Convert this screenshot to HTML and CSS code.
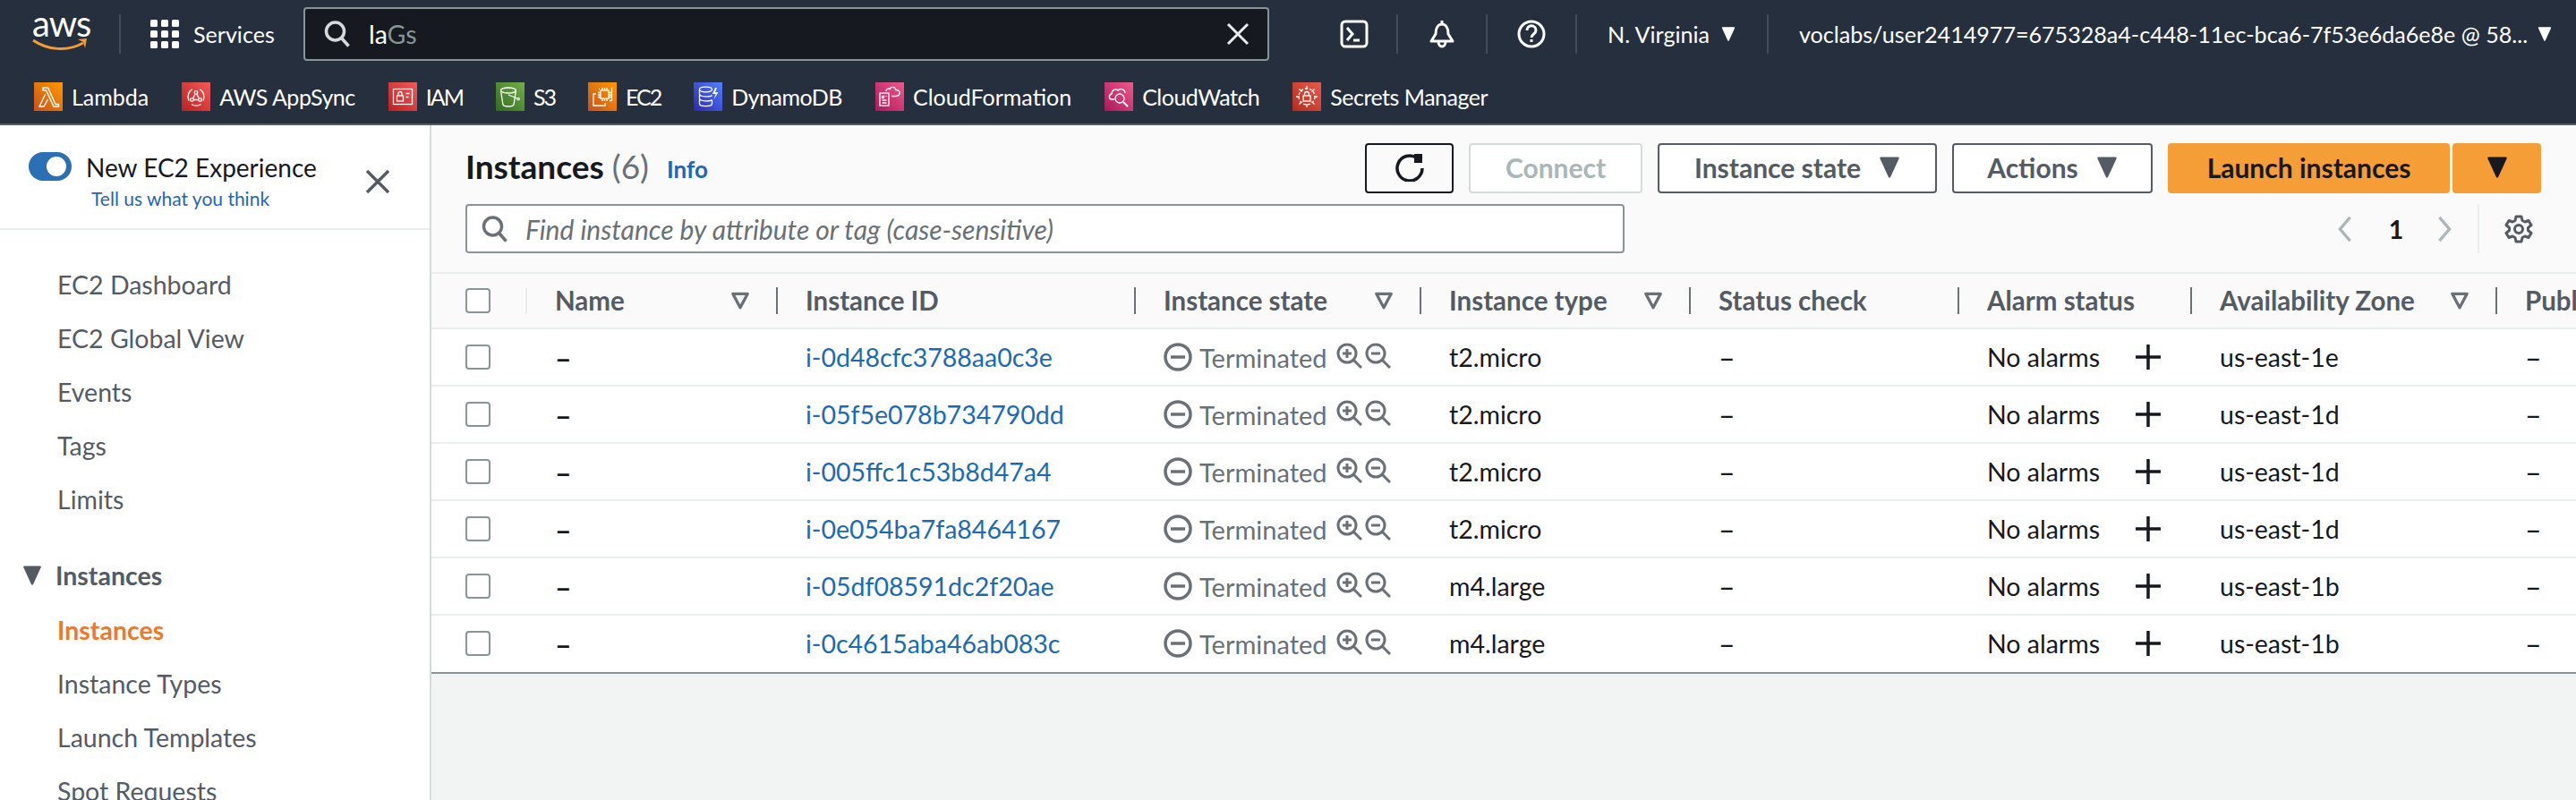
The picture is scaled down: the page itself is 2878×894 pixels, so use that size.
FILE: index.html
```html
<!DOCTYPE html>
<html lang="en">
<head>
<meta charset="utf-8">
<title>Instances | EC2 Management Console</title>
<link rel="stylesheet" href="styles.css">
</head>
<body>
<svg class="defs" aria-hidden="true">
  <defs>
    <linearGradient id="g-orange" x1="0" y1="1" x2="1" y2="0"><stop offset="0" stop-color="#c8511b"/><stop offset="1" stop-color="#f90"/></linearGradient>
    <linearGradient id="g-red" x1="0" y1="1" x2="1" y2="0"><stop offset="0" stop-color="#bd2020"/><stop offset="1" stop-color="#f25a5a"/></linearGradient>
    <linearGradient id="g-green" x1="0" y1="1" x2="1" y2="0"><stop offset="0" stop-color="#2f6b1c"/><stop offset="1" stop-color="#74ae4a"/></linearGradient>
    <linearGradient id="g-blue" x1="0" y1="1" x2="1" y2="0"><stop offset="0" stop-color="#2e27ad"/><stop offset="1" stop-color="#527fff"/></linearGradient>
    <linearGradient id="g-pink" x1="0" y1="1" x2="1" y2="0"><stop offset="0" stop-color="#a8195a"/><stop offset="1" stop-color="#f2588c"/></linearGradient>
    <linearGradient id="g-sec" x1="0" y1="1" x2="1" y2="0"><stop offset="0" stop-color="#b22d1e"/><stop offset="1" stop-color="#ea5a4c"/></linearGradient>

    <symbol id="tri" viewBox="0 0 14 14"><path d="M1.5 1h11L7 13z" fill="currentColor" stroke="currentColor" stroke-width="1.5" stroke-linejoin="round"/></symbol>
    <symbol id="filter" viewBox="0 0 20 18"><path d="M2.5 2h15L10 16z" fill="none" stroke="currentColor" stroke-width="3" stroke-linejoin="round"/></symbol>
    <symbol id="zoom-in" viewBox="0 0 29 29"><g fill="none" stroke="currentColor" stroke-width="3"><circle cx="12" cy="12" r="10"/><path d="M19 19l9 9M12 7v10M7 12h10"/></g></symbol>
    <symbol id="zoom-out" viewBox="0 0 29 29"><g fill="none" stroke="currentColor" stroke-width="3"><circle cx="12" cy="12" r="10"/><path d="M19 19l9 9M7 12h10"/></g></symbol>
    <symbol id="stopped" viewBox="0 0 32 32"><g fill="none" stroke="currentColor" stroke-width="3.5"><circle cx="16" cy="16" r="14"/><path d="M8 16h16"/></g></symbol>
    <symbol id="plus" viewBox="0 0 30 30"><path d="M15 1v28M1 15h28" fill="none" stroke="currentColor" stroke-width="3.5"/></symbol>
    <symbol id="search" viewBox="0 0 30 30"><g fill="none" stroke="currentColor" stroke-width="3.5"><circle cx="12.5" cy="12" r="10"/><path d="M19.5 19.5l8 9"/></g></symbol>

    <symbol id="i-lambda" viewBox="0 0 32 32"><rect width="32" height="32" fill="url(#g-orange)"/><path d="M10 6h5.5l8.5 18.5h3.5V27h-5.5L13.500 9H10zM12.500 13.500L6 27h5l4.500-8" fill="none" stroke="#fff" stroke-width="1.400"/></symbol>
    <symbol id="i-appsync" viewBox="0 0 32 32"><rect width="32" height="32" fill="url(#g-red)"/><g fill="none" stroke="#fff" stroke-width="1.300"><path d="M12 7.500a10 10 0 0 0-4 13M11 24.500a10 10 0 0 0 10.500 0M24 20.500a10 10 0 0 0-4-13"/><circle cx="16" cy="11.500" r="1.800"/><circle cx="11.500" cy="19.500" r="1.800"/><circle cx="20.500" cy="19.500" r="1.800"/><path d="M15 13.500l-2.500 4.500M17 13.500l2.500 4.500M13.500 19.500h5"/></g></symbol>
    <symbol id="i-iam" viewBox="0 0 32 32"><rect width="32" height="32" fill="url(#g-red)"/><g fill="none" stroke="#fff" stroke-width="1.300"><rect x="5.500" y="7.500" width="21" height="17"/><rect x="9.500" y="15" width="7" height="6"/><path d="M11 15v-2.500a2 2 0 0 1 4 0V15M19.500 12.500h4M19.500 16.500h3"/></g></symbol>
    <symbol id="i-s3" viewBox="0 0 32 32"><rect width="32" height="32" fill="url(#g-green)"/><g fill="none" stroke="#fff" stroke-width="1.300"><ellipse cx="14" cy="9" rx="8.500" ry="3"/><path d="M5.500 9l2.500 16c1 2.500 11 2.500 12 0l2.500-16M14 14l10 4"/><circle cx="25" cy="18.500" r="1.200"/></g></symbol>
    <symbol id="i-ec2" viewBox="0 0 32 32"><rect width="32" height="32" fill="url(#g-orange)"/><g fill="none" stroke="#fff" stroke-width="1.300"><rect x="14" y="9" width="9" height="9"/><path d="M16 6v3M18.500 6v3M21 6v3M16 18v3M18.500 18v3M21 18v3M11 11.500h3M11 14h3M11 16.500h3M23 11.500h3M23 14h3M23 16.500h3M9 13H6v13h13v-3M12 7.500h1M24 20.500h2.500V5.500"/></g></symbol>
    <symbol id="i-dynamo" viewBox="0 0 32 32"><rect width="32" height="32" fill="url(#g-blue)"/><g fill="none" stroke="#fff" stroke-width="1.300"><ellipse cx="13.500" cy="8" rx="7" ry="2.800"/><path d="M6.500 8v16c0 3.500 14 3.500 14 0v-4M6.500 13c0 3.500 12 3.500 14 1.500M6.500 18c0 3.500 12 3.500 14 1.500"/><path d="M24 6l-3 7h3.500l-2 6 5-8H24l2-5z" fill="#fff" stroke="none"/></g></symbol>
    <symbol id="i-cf" viewBox="0 0 32 32"><rect width="32" height="32" fill="url(#g-pink)"/><g fill="none" stroke="#fff" stroke-width="1.300"><rect x="5" y="12" width="10" height="14"/><path d="M7.500 15.500h2v2h-2zM7.500 20h5M7.500 23h5M11.500 15.500h1M12 10c0-3 3-3.500 4-2.500 1-3 6-3 7 1 3 0 4.500 2 4 4s-2 3-4 3h-5"/></g></symbol>
    <symbol id="i-cw" viewBox="0 0 32 32"><rect width="32" height="32" fill="url(#g-pink)"/><g fill="none" stroke="#fff" stroke-width="1.300"><path d="M11 19H8c-3 0-4-5 0-6 0-5 5-6 7-4 3-3 8-1 8 3"/><circle cx="17" cy="18" r="5"/><path d="M21 22l5 5" stroke-width="2"/></g></symbol>
    <symbol id="i-secrets" viewBox="0 0 32 32"><rect width="32" height="32" fill="url(#g-sec)"/><g fill="none" stroke="#fff" stroke-width="1.300"><circle cx="16" cy="16" r="9" stroke-dasharray="3 2"/><rect x="12" y="15" width="8" height="6"/><path d="M13.500 15v-2a2.500 2.500 0 0 1 5 0v2M16 4v4M16 24v4M4 16h4M24 16h4M7.500 7.500l3 3M21.500 21.500l3 3M24.500 7.500l-3 3M7.500 24.500l3-3"/></g></symbol>
  </defs>
</svg>

<header class="topnav">
  <div class="nav-main">
    <div class="logo">
      <span class="logo-word">aws</span>
      <svg class="logo-smile" viewBox="0 0 62 16"><path d="M1 3c16 11 38 13 56 3" fill="none" stroke="#f29d38" stroke-width="3"/><path d="M51 2l10-1-2 11-2-7z" fill="#f29d38"/></svg>
    </div>
    <div class="services">
      <svg class="grid-icon" viewBox="0 0 32 32"><g fill="#fff"><rect width="8" height="8" rx="1.500"/><rect x="12" width="8" height="8" rx="1.500"/><rect x="24" width="8" height="8" rx="1.500"/><rect y="12" width="8" height="8" rx="1.500"/><rect x="12" y="12" width="8" height="8" rx="1.500"/><rect x="24" y="12" width="8" height="8" rx="1.500"/><rect y="24" width="8" height="8" rx="1.500"/><rect x="12" y="24" width="8" height="8" rx="1.500"/><rect x="24" y="24" width="8" height="8" rx="1.500"/></g></svg>
      <span>Services</span>
    </div>
    <div class="global-search">
      <svg class="gs-icon"><use href="#search"/></svg>
      <span class="gs-text">la<span class="gs-hint">Gs</span></span>
      <svg class="gs-close" viewBox="0 0 26 26"><path d="M2 2l22 22M24 2L2 24" fill="none" stroke="#eaeded" stroke-width="3"/></svg>
    </div>
    <div class="nav-cell first">
      <svg class="nav-icon" viewBox="0 0 32 32"><rect x="2" y="2" width="28" height="28" rx="4" fill="none" stroke="#fff" stroke-width="3"/><path d="M8 9l6 7-6 7M15 23h7" fill="none" stroke="#fff" stroke-width="3"/></svg>
    </div>
    <div class="nav-cell">
      <svg class="nav-icon" viewBox="0 0 32 32"><path d="M16 1v4M9 16c0-7 3-11 7-11s7 4 7 11l5 8H4zM12 24c0 8 8 8 8 0" fill="none" stroke="#fff" stroke-width="3" stroke-linejoin="round"/></svg>
    </div>
    <div class="nav-cell">
      <svg class="nav-icon" viewBox="0 0 32 32"><circle cx="16" cy="16" r="14" fill="none" stroke="#fff" stroke-width="3"/><path d="M11 12c0-7 10-7 10 0 0 4-5 4-5 8" fill="none" stroke="#fff" stroke-width="3"/><rect x="14.500" y="22" width="3" height="3" fill="#fff"/></svg>
    </div>
    <div class="nav-menu region"><span>N. Virginia</span><svg class="caret"><use href="#tri"/></svg></div>
    <div class="nav-menu user"><span>voclabs/user2414977=675328a4-c448-11ec-bca6-7f53e6da6e8e @ 58...</span><svg class="caret"><use href="#tri"/></svg></div>
  </div>
  <nav class="shortcuts">
    <a class="shortcut"><svg><use href="#i-lambda"/></svg>Lambda</a>
    <a class="shortcut tight"><svg><use href="#i-appsync"/></svg>AWS AppSync</a>
    <a class="shortcut caps"><svg><use href="#i-iam"/></svg>IAM</a>
    <a class="shortcut caps"><svg><use href="#i-s3"/></svg>S3</a>
    <a class="shortcut caps"><svg><use href="#i-ec2"/></svg>EC2</a>
    <a class="shortcut tight"><svg><use href="#i-dynamo"/></svg>DynamoDB</a>
    <a class="shortcut"><svg><use href="#i-cf"/></svg>CloudFormation</a>
    <a class="shortcut tight"><svg><use href="#i-cw"/></svg>CloudWatch</a>
    <a class="shortcut tight"><svg><use href="#i-secrets"/></svg>Secrets Manager</a>
  </nav>
</header>

<div class="app">
  <aside class="sidebar">
    <div class="experience">
      <span class="toggle"><span class="knob"></span></span>
      <div class="exp-text">
        <div class="exp-title">New EC2 Experience</div>
        <a class="exp-link">Tell us what you think</a>
      </div>
      <svg class="exp-close" viewBox="0 0 28 28"><path d="M2 2l24 24M26 2L2 26" fill="none" stroke="#545b64" stroke-width="3.500"/></svg>
    </div>
    <ul class="side-list top">
      <li>EC2 Dashboard</li>
      <li>EC2 Global View</li>
      <li>Events</li>
      <li>Tags</li>
      <li>Limits</li>
    </ul>
    <div class="side-section"><svg class="side-caret"><use href="#tri"/></svg>Instances</div>
    <ul class="side-list">
      <li class="active">Instances</li>
      <li>Instance Types</li>
      <li>Launch Templates</li>
      <li>Spot Requests</li>
    </ul>
  </aside>

  <main class="content">
    <div class="panel-head">
      <div class="title-row">
        <h1 class="title">Instances <span class="count">(6)</span></h1>
        <a class="info">Info</a>
        <div class="actions">
          <button class="btn refresh"><svg class="refresh-icon" viewBox="0 0 32 32"><path d="M24 5.500A14 14 0 1 0 30 17" fill="none" stroke="#16191f" stroke-width="3.500"/><path d="M21 1h9v10h-9z" fill="#16191f"/></svg></button>
          <button class="btn connect">Connect</button>
          <button class="btn state">Instance state<svg class="btn-caret"><use href="#tri"/></svg></button>
          <button class="btn act">Actions<svg class="btn-caret"><use href="#tri"/></svg></button>
          <div class="split">
            <button class="btn primary launch">Launch instances</button>
            <button class="btn primary more"><svg class="btn-caret"><use href="#tri"/></svg></button>
          </div>
        </div>
      </div>
      <div class="filter-row">
        <div class="filter-box">
          <svg class="filter-icon"><use href="#search"/></svg>
          <span>Find instance by attribute or tag (case-sensitive)</span>
        </div>
        <div class="pager">
          <svg class="chev" viewBox="0 0 18 32"><path d="M15 2L3 16l12 14" fill="none" stroke="#aab7b8" stroke-width="3.500"/></svg>
          <span class="page-num">1</span>
          <svg class="chev" viewBox="0 0 18 32"><path d="M3 2l12 14L3 30" fill="none" stroke="#aab7b8" stroke-width="3.500"/></svg>
          <span class="gear-wrap"><svg class="gear" viewBox="0 0 32 32"><g fill="none" stroke="#545b64" stroke-width="3"><circle cx="16" cy="16" r="4.500"/><path d="M13 2h6l1 4.500 3 1.500 4-1.500 3 5-3.500 3v3l3.500 3-3 5-4-1.500-3 1.500-1 4.500h-6l-1-4.500-3-1.500-4 1.500-3-5 3.500-3v-3l-3.500-3 3-5 4 1.500 3-1.500z" stroke-linejoin="round"/></g></svg></span>
        </div>
      </div>
    </div>

    <div class="table">
      <div class="row head">
        <div class="cell cb"><span class="checkbox"></span></div>
        <div class="cell light">Name<svg class="sort"><use href="#filter"/></svg></div>
        <div class="cell">Instance ID</div>
        <div class="cell">Instance state<svg class="sort"><use href="#filter"/></svg></div>
        <div class="cell">Instance type<svg class="sort"><use href="#filter"/></svg></div>
        <div class="cell">Status check</div>
        <div class="cell">Alarm status</div>
        <div class="cell">Availability Zone<svg class="sort"><use href="#filter"/></svg></div>
        <div class="cell">Public IPv4 DNS</div>
      </div>

      <div class="row">
        <div class="cell cb"><span class="checkbox"></span></div>
        <div class="cell dash strong">–</div>
        <div class="cell"><a class="link">i-0d48cfc3788aa0c3e</a></div>
        <div class="cell status"><svg class="st-icon"><use href="#stopped"/></svg><span>Terminated</span><svg class="zi"><use href="#zoom-in"/></svg><svg class="zo"><use href="#zoom-out"/></svg></div>
        <div class="cell">t2.micro</div>
        <div class="cell dash">–</div>
        <div class="cell">No alarms<svg class="add"><use href="#plus"/></svg></div>
        <div class="cell">us-east-1e</div>
        <div class="cell dash">–</div>
      </div>
      <div class="row">
        <div class="cell cb"><span class="checkbox"></span></div>
        <div class="cell dash strong">–</div>
        <div class="cell"><a class="link">i-05f5e078b734790dd</a></div>
        <div class="cell status"><svg class="st-icon"><use href="#stopped"/></svg><span>Terminated</span><svg class="zi"><use href="#zoom-in"/></svg><svg class="zo"><use href="#zoom-out"/></svg></div>
        <div class="cell">t2.micro</div>
        <div class="cell dash">–</div>
        <div class="cell">No alarms<svg class="add"><use href="#plus"/></svg></div>
        <div class="cell">us-east-1d</div>
        <div class="cell dash">–</div>
      </div>
      <div class="row">
        <div class="cell cb"><span class="checkbox"></span></div>
        <div class="cell dash strong">–</div>
        <div class="cell"><a class="link">i-005ffc1c53b8d47a4</a></div>
        <div class="cell status"><svg class="st-icon"><use href="#stopped"/></svg><span>Terminated</span><svg class="zi"><use href="#zoom-in"/></svg><svg class="zo"><use href="#zoom-out"/></svg></div>
        <div class="cell">t2.micro</div>
        <div class="cell dash">–</div>
        <div class="cell">No alarms<svg class="add"><use href="#plus"/></svg></div>
        <div class="cell">us-east-1d</div>
        <div class="cell dash">–</div>
      </div>
      <div class="row">
        <div class="cell cb"><span class="checkbox"></span></div>
        <div class="cell dash strong">–</div>
        <div class="cell"><a class="link">i-0e054ba7fa8464167</a></div>
        <div class="cell status"><svg class="st-icon"><use href="#stopped"/></svg><span>Terminated</span><svg class="zi"><use href="#zoom-in"/></svg><svg class="zo"><use href="#zoom-out"/></svg></div>
        <div class="cell">t2.micro</div>
        <div class="cell dash">–</div>
        <div class="cell">No alarms<svg class="add"><use href="#plus"/></svg></div>
        <div class="cell">us-east-1d</div>
        <div class="cell dash">–</div>
      </div>
      <div class="row">
        <div class="cell cb"><span class="checkbox"></span></div>
        <div class="cell dash strong">–</div>
        <div class="cell"><a class="link">i-05df08591dc2f20ae</a></div>
        <div class="cell status"><svg class="st-icon"><use href="#stopped"/></svg><span>Terminated</span><svg class="zi"><use href="#zoom-in"/></svg><svg class="zo"><use href="#zoom-out"/></svg></div>
        <div class="cell">m4.large</div>
        <div class="cell dash">–</div>
        <div class="cell">No alarms<svg class="add"><use href="#plus"/></svg></div>
        <div class="cell">us-east-1b</div>
        <div class="cell dash">–</div>
      </div>
      <div class="row last">
        <div class="cell cb"><span class="checkbox"></span></div>
        <div class="cell dash strong">–</div>
        <div class="cell"><a class="link">i-0c4615aba46ab083c</a></div>
        <div class="cell status"><svg class="st-icon"><use href="#stopped"/></svg><span>Terminated</span><svg class="zi"><use href="#zoom-in"/></svg><svg class="zo"><use href="#zoom-out"/></svg></div>
        <div class="cell">m4.large</div>
        <div class="cell dash">–</div>
        <div class="cell">No alarms<svg class="add"><use href="#plus"/></svg></div>
        <div class="cell">us-east-1b</div>
        <div class="cell dash">–</div>
      </div>
    </div>
  </main>
</div>
</body>
</html>
```

FILE: styles.css
```css
* { box-sizing: border-box; }

html, body {
  margin: 0;
  height: 100%;
  overflow: hidden;
}

body {
  font-family: "Lato", "Liberation Sans", sans-serif;
  font-size: 28.5px;
  color: #16191f;
  background: #f2f3f3;
}

.defs { position: absolute; width: 0; height: 0; }

svg { display: block; flex: none; }

/* top navigation */
.topnav {
  height: 140px;
  background: #252f3e;
  border-bottom: 2px solid #545b64;
  color: #fff;
}

.nav-main {
  display: flex;
  align-items: center;
  height: 76px;
  padding-left: 36px;
  font-size: 25.1px;
}

.logo {
  box-sizing: content-box;
  width: 62px;
  height: 44px;
  padding-right: 35px;
  border-right: 2px solid #414c5c;
  display: flex;
  flex-direction: column;
  align-items: flex-start;
}

.logo-word {
  font-size: 40px;
  line-height: 28px;
  height: 26px;
  letter-spacing: -1px;
  margin-top: -4px;
}

.logo-smile { width: 62px; height: 16px; margin-top: 4px; }

.services {
  display: flex;
  align-items: center;
  gap: 16px;
  width: 204px;
  padding-left: 33px;
}

.grid-icon { width: 32px; height: 32px; }

.global-search {
  display: flex;
  align-items: center;
  width: 1079px;
  height: 60px;
  margin-top: -1px;
  padding: 0 20px 0 21px;
  background: #16191f;
  border: 2px solid #879596;
  border-radius: 4px;
  font-size: 28.5px;
}

.gs-icon { width: 30px; height: 30px; color: #d5dbdb; }
.gs-text { margin-left: 20px; }
.gs-hint { color: #879596; }
.gs-close { width: 26px; height: 26px; margin-left: auto; }

.nav-cell {
  width: 100px;
  height: 44px;
  border-right: 2px solid #414c5c;
  display: flex;
  align-items: center;
  justify-content: center;
}

.nav-cell.first { margin-left: 44px; padding-left: 3px; }

.nav-icon { width: 32px; height: 32px; }

.nav-menu { display: flex; align-items: center; white-space: nowrap; }

.region {
  width: 214px;
  height: 44px;
  padding-left: 34px;
  border-right: 2px solid #414c5c;
  gap: 13px;
}

.user { padding-left: 34px; gap: 11px; }

.caret { width: 16px; height: 16px; color: #fff; }

.shortcuts {
  display: flex;
  align-items: center;
  gap: 37px;
  height: 62px;
  padding: 2px 0 0 38px;
  font-size: 25px;
}

.shortcut {
  display: flex;
  align-items: center;
  gap: 10px;
  white-space: nowrap;
}

.shortcut svg { width: 32px; height: 32px; }
.shortcut.caps { letter-spacing: -2px; }
.shortcut.tight { letter-spacing: -0.5px; }

/* page body */
.app { display: flex; height: 754px; }

.sidebar {
  width: 482px;
  flex: none;
  height: 100%;
  overflow: hidden;
  background: #fff;
  border-right: 2px solid #d5dbdb;
  color: #545b64;
}

.experience {
  display: flex;
  height: 117px;
  padding: 30px 0 0 32px;
  border-bottom: 2px solid #eaeded;
}

.toggle {
  width: 48px;
  height: 32px;
  padding: 5px 6px 5px 20px;
  border-radius: 16px;
  background: #2b6fb5;
}

.knob { display: block; width: 22px; height: 22px; border-radius: 50%; background: #fff; }

.exp-text { margin-left: 16px; width: 312px; color: #16191f; }
.exp-title { font-size: 28px; line-height: 34px; white-space: nowrap; }
.exp-link { display: block; margin: 3px 0 0 6px; font-size: 21px; line-height: 30px; color: #1f66b8; white-space: nowrap; }
.exp-close { width: 28px; height: 28px; margin-top: 19px; }

.side-list { list-style: none; margin: 0; padding: 0 0 0 64px; }
.side-list li { height: 60px; line-height: 60px; white-space: nowrap; }
.side-list.top { margin-top: 31px; }
.side-list .active { color: #ec7a2a; font-weight: 700; }

.side-section {
  display: flex;
  align-items: center;
  gap: 15px;
  height: 63px;
  margin-top: 23px;
  padding-left: 25px;
  font-weight: 700;
}

.side-caret { width: 22px; height: 22px; }

.content { flex: 1; min-width: 0; overflow: hidden; }

.panel-head { padding: 20px 39px 21px 38px; background: #fafafa; }

.title-row { display: flex; align-items: center; height: 56px; }

.title { margin: -5px 0 0; font-size: 37px; font-weight: 700; white-space: nowrap; }
.count { font-weight: 400; color: #687078; }
.info { margin-left: 20px; margin-top: 2px; font-size: 26px; font-weight: 700; color: #1f66b8; }

.actions { display: flex; align-items: center; gap: 17px; margin-left: auto; }

.btn {
  display: flex;
  align-items: center;
  justify-content: center;
  gap: 20px;
  height: 56px;
  padding: 0 0 2px;
  border: 2px solid #545b64;
  border-radius: 4px;
  background: #fff;
  color: #545b64;
  font: 700 30px "Lato", "Liberation Sans", sans-serif;
  white-space: nowrap;
}

.btn-caret { width: 24px; height: 24px; }

.refresh { width: 99px; background: #fafafa; border-color: #16191f; }
.refresh-icon { width: 32px; height: 32px; }
.connect { width: 194px; border-color: #d5dbdb; color: #aab7b8; }
.state { width: 312px; }
.act { width: 224px; }

.split { display: flex; gap: 3px; }
.primary { background: #f59e38; border-color: #f59e38; color: #16191f; }
.launch { width: 315px; }
.more { width: 99px; }

.filter-row { display: flex; align-items: center; height: 55px; margin-top: 12px; }

.filter-box {
  display: flex;
  align-items: center;
  gap: 19px;
  width: 1295px;
  height: 55px;
  padding-left: 16px;
  background: #fff;
  border: 2px solid #879596;
  border-radius: 4px;
  color: #687078;
  font-size: 30px;
  font-style: italic;
  white-space: nowrap;
}

.filter-icon { width: 30px; height: 30px; }

.pager { display: flex; align-items: center; height: 55px; margin-left: auto; }

.chev { width: 18px; height: 30px; }
.page-num { width: 90px; margin-left: 3px; text-align: center; font-weight: 700; color: #16191f; }

.gear-wrap {
  display: flex;
  align-items: center;
  height: 55px;
  margin-left: 28px;
  padding: 0 9px 0 28px;
  border-left: 2px solid #eaeded;
}

.gear { width: 32px; height: 32px; }

/* table */
.table { background: #fff; }

.row {
  display: grid;
  grid-template-columns: 105px 280px 400px 319px 301px 300px 260px 341px minmax(0, 1fr);
  align-items: center;
  height: 64px;
  overflow: hidden;
  border-bottom: 2px solid #eaeded;
  white-space: nowrap;
}

.row.last { height: 65px; padding-bottom: 1px; border-bottom-color: #879596; }

.cell {
  display: flex;
  align-items: center;
  padding-left: 33px;
}

.cb { padding-left: 38px; }

.dash { font-size: 32px; }
.dash.strong { font-weight: 700; }

.checkbox {
  display: block;
  width: 28px;
  height: 28px;
  background: #fff;
  border: 2px solid #879596;
  border-radius: 4px;
}

.head {
  height: 64px;
  background: #fafafa;
  border-top: 2px solid #eaeded;
  font-size: 29.5px;
  font-weight: 700;
  color: #545b64;
}

.head .cell {
  height: 30px;
  padding-left: 31px;
  border-left: 2px solid #687078;
  line-height: 28px;
}

.head .cell.cb { padding-left: 38px; border-left: 0; }
.head .cell.light { border-left-color: #eaeded; }

.sort { width: 22px; height: 20px; margin-left: auto; margin-right: 29px; color: #687078; }

.link { color: #1a6bb3; }

.status { color: #687078; font-size: 29px; }
.st-icon { width: 32px; height: 32px; margin-right: 8px; }
.zi { width: 29px; height: 29px; margin-left: 10px; margin-top: -4px; }
.zo { width: 29px; height: 29px; margin-left: 3px; margin-top: -4px; }

.add { width: 30px; height: 30px; margin-left: auto; margin-right: 32px; }
```
